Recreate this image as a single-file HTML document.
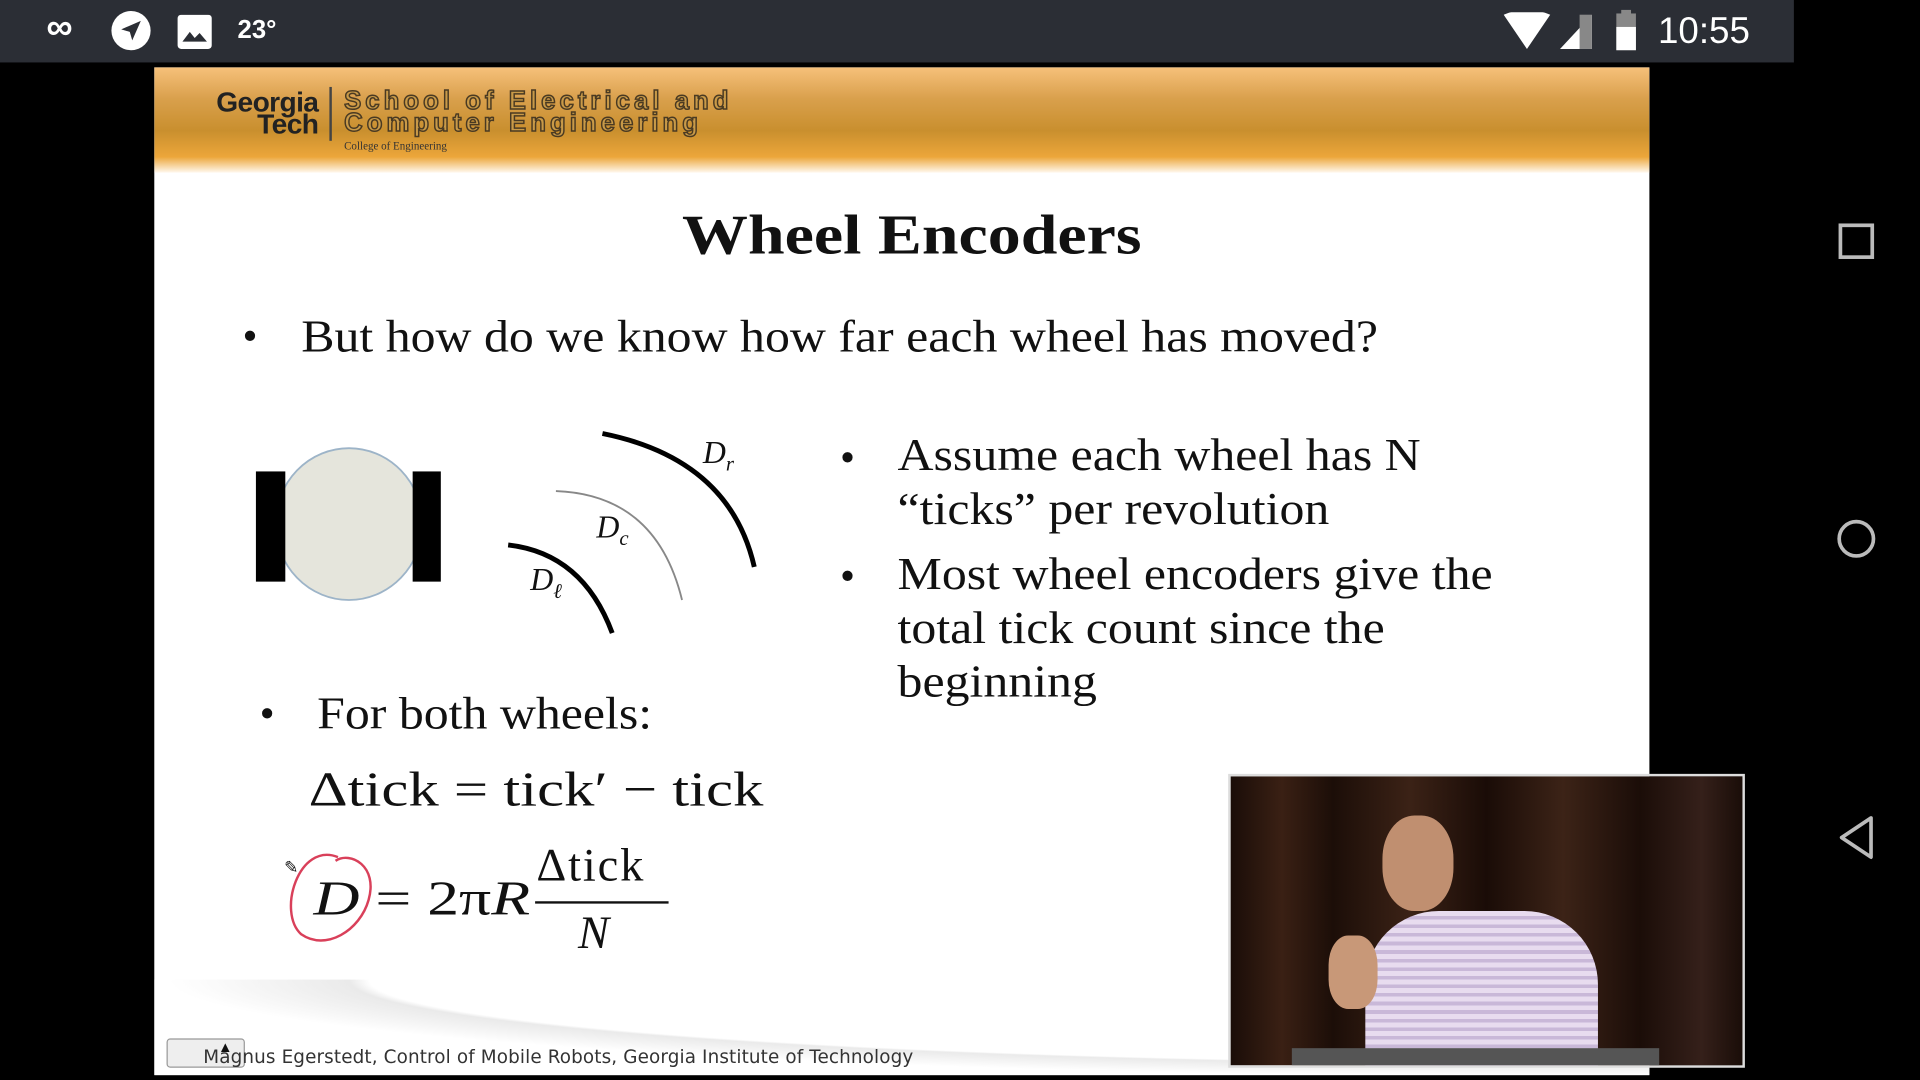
<!DOCTYPE html>
<html><head><meta charset="utf-8"><style>
html,body{margin:0;padding:0;background:#000;width:1920px;height:1080px;overflow:hidden}
#w{position:absolute;left:0;top:0;width:1568px;height:882px;transform:scale(1.22449);transform-origin:0 0;background:#000}
.abs{position:absolute}
.serif{font-family:"Liberation Serif",serif;color:#111;white-space:nowrap;transform-origin:0 0}
.b{font-size:37px;transform:scaleX(1.1)}
#sb{left:0;top:0;width:1465px;height:51px;background:#2b2e35;color:#fff;font-family:"Liberation Sans",sans-serif}
#slide{left:126px;top:55px;width:1221px;height:823px;background:#fff;overflow:hidden}
#hdr{left:0;top:0;width:1221px;height:86px;background:linear-gradient(#f6c07a 0%,#d9a04c 30%,#c98f2e 60%,#eca63a 85%,#fff8ee 100%)}
</style></head><body><div id="w">
<div id="sb" class="abs">
 <div class="abs" style="left:38px;top:6px;font-size:30px;font-weight:bold">∞</div>
 <svg class="abs" style="left:90px;top:8px" width="34" height="34"><circle cx="17" cy="17" r="16" fill="#fff"/><path d="M25 9 L9 16 L16 18 L18 25 Z" fill="#2b2e35"/></svg>
 <svg class="abs" style="left:145px;top:12px" width="28" height="28"><rect x="0" y="0" width="28" height="28" rx="3" fill="#fff"/><path d="M4 22 L10 14 L14 19 L18 15 L24 22 Z" fill="#2b2e35"/></svg>
 <div class="abs" style="left:194px;top:13px;font-size:21px;font-weight:bold">23°</div>
 <svg class="abs" style="left:1228px;top:10px" width="80" height="32"><path d="M0 2 Q19 -6 38 2 L19 30 Z" fill="#fff"/><path d="M72 2 L72 30 L46 30 Z" fill="#fff"/><rect x="62" y="2" width="10" height="28" fill="#888"/></svg>
 <svg class="abs" style="left:1318px;top:8px" width="22" height="34"><rect x="6" y="0" width="8" height="4" fill="#888"/><rect x="2" y="3" width="16" height="30" fill="#888"/><rect x="2" y="14" width="16" height="19" fill="#fff"/></svg>
 <div class="abs" style="left:1354px;top:9px;font-size:30px">10:55</div>
</div>
<svg class="abs" style="left:1495px;top:175px" width="45" height="540"><rect x="8" y="9" width="26" height="26" fill="none" stroke="#bbb" stroke-width="3"/><circle cx="21" cy="265" r="14" fill="none" stroke="#bbb" stroke-width="3"/><path d="M33 493 L9 509 L33 525 Z" fill="none" stroke="#bbb" stroke-width="3" stroke-linejoin="round"/></svg>
<div id="slide" class="abs">
 <div id="hdr" class="abs"></div>
 <div class="abs" style="left:20px;top:19px;font:bold 23px/18px 'Liberation Sans',sans-serif;color:#222;text-align:right;width:114px;letter-spacing:-0.5px">Georgia<br>Tech</div>
 <div class="abs" style="left:143px;top:16px;width:2px;height:44px;background:#444"></div>
 <div class="abs" style="left:155px;top:19px;font:bold 21px/18px 'Liberation Sans',sans-serif;color:#c99a48;-webkit-text-stroke:1.2px #4a3a22;letter-spacing:3.3px;white-space:nowrap">School of Electrical and<br>Computer Engineering</div>
 <div class="abs" style="left:155px;top:59px;font:9px 'Liberation Serif',serif;color:#333">College of Engineering</div>
 <div class="abs serif" style="left:431px;top:110px;font-size:46px;font-weight:bold;transform:scaleX(1.17)">Wheel Encoders</div>
 <div class="abs serif" style="left:72px;top:200px;font-size:35px">•</div>
 <div class="abs serif b" style="left:120px;top:199px">But how do we know how far each wheel has moved?</div>
 <svg class="abs" style="left:0;top:0" width="1221" height="823">
  <ellipse cx="159" cy="373" rx="60" ry="62" fill="#e5e5dc" stroke="#9db4c8" stroke-width="1.5"/>
  <rect x="83" y="330" width="24" height="90" fill="#000"/>
  <rect x="211" y="330" width="23" height="90" fill="#000"/>
  <path d="M289 390 Q350 397 374 462" fill="none" stroke="#000" stroke-width="4"/>
  <path d="M328 346 Q410 349 431 435" fill="none" stroke="#888" stroke-width="1.5"/>
  <path d="M366 299 Q470 320 490 408" fill="none" stroke="#000" stroke-width="4"/>
  <path d="M150 645 C118 632 100 690 120 708 C140 722 168 705 175 680 C183 652 160 640 148 648" fill="none" stroke="#d9405a" stroke-width="2"/>
  <line x1="311" y1="682" x2="420" y2="682" stroke="#111" stroke-width="2"/>
 </svg>
 <div class="abs serif" style="left:448px;top:300px;font-size:26px;font-style:italic">D<sub style="font-size:17px">r</sub></div>
 <div class="abs serif" style="left:361px;top:361px;font-size:26px;font-style:italic">D<sub style="font-size:17px">c</sub></div>
 <div class="abs serif" style="left:307px;top:404px;font-size:26px;font-style:italic">D<sub style="font-size:17px">ℓ</sub></div>
 <div class="abs serif" style="left:560px;top:297px;font-size:35px;line-height:44px">•</div>
 <div class="abs serif b" style="left:607px;top:296px;line-height:44px">Assume each wheel has N<br>“ticks” per revolution</div>
 <div class="abs serif" style="left:560px;top:394px;font-size:35px;line-height:44px">•</div>
 <div class="abs serif b" style="left:607px;top:393px;line-height:44px">Most wheel encoders give the<br>total tick count since the<br>beginning</div>
 <div class="abs serif" style="left:86px;top:508px;font-size:35px">•</div>
 <div class="abs serif b" style="left:133px;top:507px">For both wheels:</div>
 <div class="abs serif" style="left:126px;top:566px;font-size:40px;transform:scaleX(1.24)">Δtick = tick′ − tick</div>
 <div class="abs serif" style="left:130px;top:655px;font-size:40px;transform:scaleX(1.3)"><i>D</i> = 2π<i>R</i></div>
 <div class="abs serif" style="left:312px;top:630px;font-size:38px;letter-spacing:1.5px">Δtick</div>
 <div class="abs serif" style="left:346px;top:685px;font-size:38px;font-style:italic">N</div>
 <div class="abs serif" style="left:106px;top:646px;font-size:14px">✎</div>
 <div class="abs" style="left:0;top:745px;width:1221px;height:80px;background:radial-gradient(ellipse at 95% 0%,transparent 60%,#eaeaea 61%,#fff 70%)"></div>
 <div class="abs" style="left:10px;top:793px;width:62px;height:22px;border:1.5px solid #999;border-radius:3px;background:#eee"></div>
 <div class="abs" style="left:52px;top:793px;font-size:12px;color:#111">▲</div>
 <div class="abs" style="left:40px;top:799px;font:15px/18px 'DejaVu Sans',sans-serif;color:#333;white-space:nowrap;letter-spacing:0.1px">Magnus Egerstedt, Control of Mobile Robots, Georgia Institute of Technology</div>
</div>
<div class="abs" style="left:1003px;top:632px;width:418px;height:236px;border:2px solid #ddd;background:linear-gradient(90deg,#1a0d08,#3a2014 10%,#1c0e08 20%,#3b2216 35%,#1a0c07 50%,#3c2317 65%,#1b0d08 80%,#35201a 92%,#1a0d08);overflow:hidden">
 <div class="abs" style="left:110px;top:110px;width:190px;height:140px;border-radius:60px 60px 0 0;background:repeating-linear-gradient(0deg,#c9b8d8 0 3px,#e8dcef 3px 7px)"></div>
 <div class="abs" style="left:124px;top:32px;width:58px;height:78px;border-radius:45%;background:#c08f70"></div>
 <div class="abs" style="left:80px;top:130px;width:40px;height:60px;border-radius:40%;background:#c89878"></div>
 <div class="abs" style="left:50px;top:222px;width:300px;height:14px;background:#555"></div>
</div>
</div></body></html>
